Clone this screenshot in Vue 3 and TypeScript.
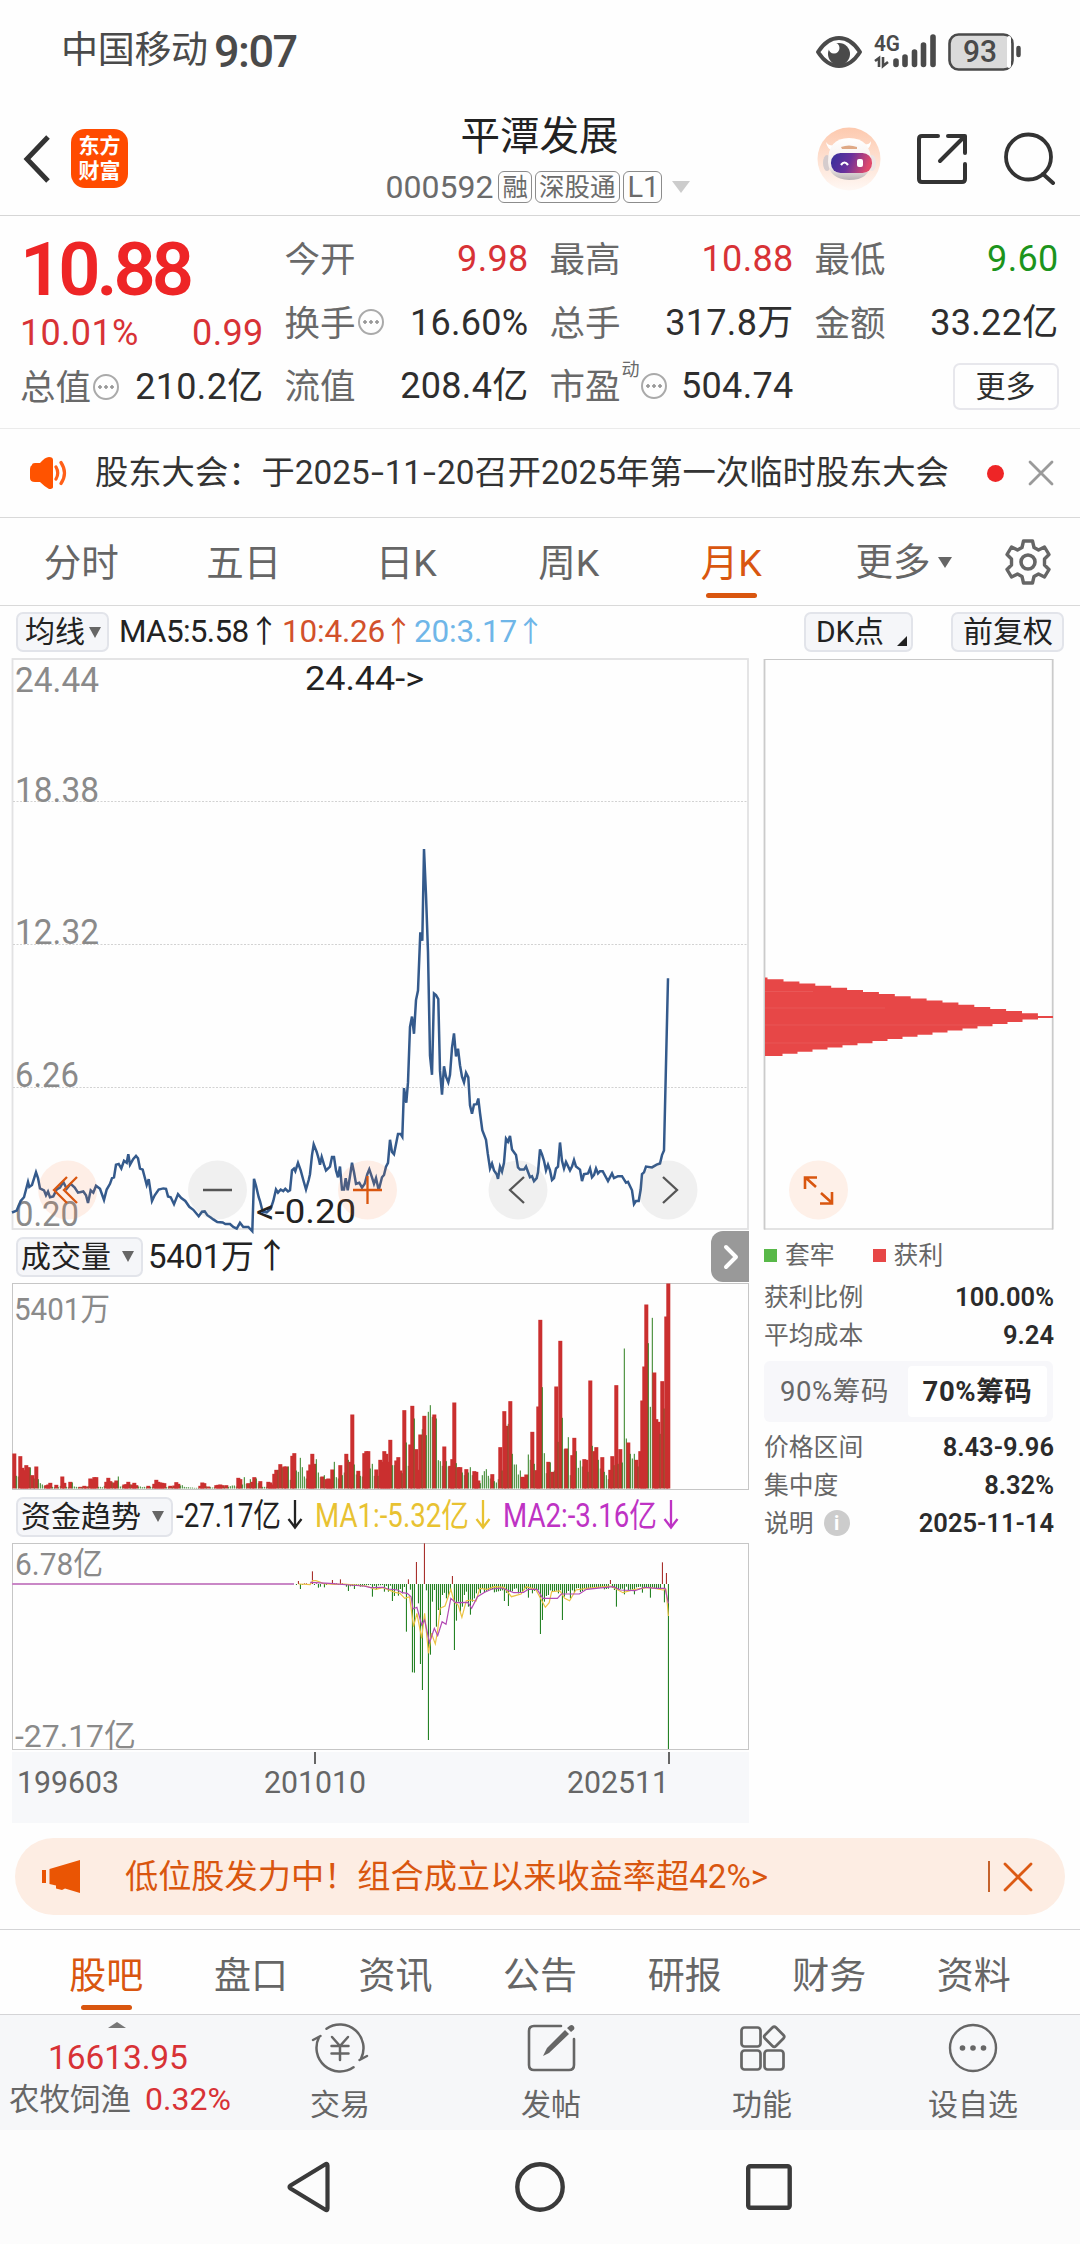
<script setup lang="ts">
type Pt = [number, number]

interface Quote { label: string; value: string; tone?: string; tip?: boolean }

const quotes: Quote[] = [
  { label: '今开', value: '9.98', tone: 'up' },
  { label: '最高', value: '10.88', tone: 'up' },
  { label: '最低', value: '9.60', tone: 'down' },
  { label: '换手', value: '16.60%', tip: true },
  { label: '总手', value: '317.8万' },
  { label: '金额', value: '33.22亿' },
]

const periods = ['分时', '五日', '日K', '周K', '月K']
const sections = ['股吧', '盘口', '资讯', '公告', '研报', '财务', '资料']

const parse = (s: string): Pt[] => s.trim().split(/\s+/).map(p => p.split(',').map(Number) as Pt)
const line = (pts: Pt[]) => pts.map(p => p.map(n => n.toFixed(1)).join(',')).join(' ')

/* monthly closing line: x in thirds of a pixel, y in chart steps below 650 */
const closeRaw = `36,1470 50,1465 62,1440 72,1430 84,1390 88,1403 96,1398 108,1365 114,1380 120,1407 132,1412 138,1425 144,1415 150,1430 160,1428 170,1410 180,1405 190,1390 200,1408 212,1395 224,1405 234,1418 250,1415 258,1425 264,1445 272,1412 280,1418 288,1400 300,1408 312,1437 320,1410 330,1395 336,1380 342,1378 348,1345 356,1343 364,1355 372,1335 380,1340 385,1318 390,1345 400,1330 408,1322 414,1328 420,1355 428,1358 434,1378 440,1398 446,1383 456,1440 464,1425 476,1410 490,1407 498,1408 504,1428 512,1430 522,1448 534,1422 544,1432 556,1440 568,1455 580,1463 596,1480 606,1468 614,1467 622,1477 632,1483 640,1488 652,1495 668,1496 676,1500 690,1500 700,1508 710,1512 720,1497 730,1508 745,1508 757,1519 762,1382 768,1400 776,1430 780,1440 788,1468 800,1470 812,1460 820,1440 828,1410 834,1418 842,1410 850,1414 856,1408 864,1415 870,1412 876,1360 882,1355 886,1362 894,1340 902,1360 910,1385 918,1410 926,1385 930,1370 936,1320 941,1292 950,1312 956,1330 960,1345 965,1325 972,1345 978,1360 990,1350 996,1325 1002,1325 1008,1360 1014,1378 1020,1350 1026,1410 1032,1410 1037,1380 1043,1412 1050,1375 1056,1340 1062,1365 1068,1395 1078,1392 1086,1405 1094,1395 1102,1370 1108,1357 1116,1378 1122,1395 1128,1380 1136,1412 1146,1378 1152,1372 1158,1350 1164,1340 1170,1280 1176,1312 1182,1318 1194,1265 1202,1265 1207,1272 1212,1145 1219,1183 1224,1130 1230,985 1236,958 1242,1003 1248,915 1254,890 1261,738 1267,760 1272,520 1278,640 1284,790 1290,1060 1296,1110 1302,898 1308,902 1315,912 1320,1100 1326,1162 1332,1088 1338,1115 1345,1130 1350,1110 1356,1040 1362,1002 1368,1062 1374,1042 1380,1085 1386,1115 1392,1130 1398,1105 1405,1117 1410,1190 1416,1212 1422,1188 1430,1187 1435,1172 1440,1210 1447,1255 1458,1280 1463,1315 1470,1355 1476,1342 1482,1360 1490,1370 1494,1382 1500,1350 1506,1363 1512,1340 1518,1277 1524,1285 1530,1270 1536,1305 1548,1320 1554,1352 1560,1358 1572,1358 1578,1350 1590,1378 1596,1375 1602,1388 1610,1380 1614,1365 1620,1305 1626,1318 1632,1335 1638,1360 1644,1345 1650,1360 1656,1385 1662,1380 1668,1355 1674,1350 1680,1287 1686,1335 1692,1355 1698,1338 1710,1360 1716,1350 1722,1333 1728,1350 1740,1358 1746,1388 1752,1370 1764,1368 1770,1355 1776,1378 1782,1372 1788,1355 1794,1368 1800,1362 1808,1362 1824,1388 1836,1368 1842,1380 1854,1375 1866,1375 1878,1392 1884,1390 1896,1412 1902,1448 1908,1440 1916,1440 1922,1410 1926,1370 1932,1365 1938,1350 1956,1352 1970,1345 1980,1342 1986,1320 1992,1308 2004,858`
const closeLine = line(parse(closeRaw).map(([x, y]): Pt => [x / 3, 650 + y / 2.6133]))

/* monthly volume, one entry for each month: height in thirds of a pixel and direction */
const volumeRaw = `105r 38g 36g 97r 62r 55r 70r 64r 63g 40r 30g 66r 28g 16g 12g 8g 10r 12r 17r 5g 4g 11r 4g 8g 36r 17r 5g 4g 20r 18g 6g 5g 4g 5r 5g 8r 6r 7g 30r 28r 34r 34r 5g 5g 4g 8g 20r 32r 22r 18g 18r 24r 36g 6g 8g 12r 13r 20r 12g 12r 17r 10r 6g 6g 4g 5g 4g 8r 5g 5g 14r 26r 20r 18r 17r 16r 4g 5g 8r 5g 9r 19r 14r 9g 10g 5g 4g 4g 3g 3g 2g 2g 2g 8r 18r 16r 6g 6r 4g 3g 4g 10r 11r 12r 10r 6g 10r 5g 7g 9g 9g 6g 32r 28r 12g 34g 14g 16r 28g 20r 34r 30g 16g 22r 5g 5g 5g 20r 18r 12r 44r 56r 56g 73r 63g 66r 66r 66g 26g 98r 106r 54g 50g 92g 64g 36g 30g 54r 72r 104r 74r 88g 48g 34g 36r 40g 28r 30r 28r 57r 80g 34g 30g 70r 40g 48g 104r 86g 80r 222r 72g 42g 53r 38g 36g 106r 112r 112r 60g 74g 38g 57r 38g 86r 80r 112r 104r 80r 146r 70g 70g 84r 94r 54r 46g 235r 138g 68g 132r 248r 210g 118r 56r 162r 178g 218r 160g 230g 250g 215g 222r 210g 85g 82g 68g 126r 82g 66g 68r 88r 258r 76g 64r 64r 48g 40g 58r 48g 64g 40g 52r 50r 24r 16g 40g 52g 58g 38g 30g 43r 22g 18g 28g 124r 54g 232r 188r 194g 262r 104g 72g 72g 42g 54g 35r 34r 42r 102g 86g 170r 74g 55r 246r 506r 304g 106g 46g 80r 78g 50r 54g 306r 140g 443r 212g 118g 120r 154g 40g 100r 152r 112g 62g 84g 66g 88r 86r 50g 324r 128g 112r 124r 86g 60g 94r 50g 40g 28g 56r 97r 70g 310r 74g 118r 78g 420g 150g 138r 104g 90g 104g 86r 66g 112r 264r 366r 552r 436g 245g 512g 348r 208r 200r 164g 322r 240g 516r 615r`
const entries = volumeRaw.split(' ')
const volume = entries.map((e, i) => {
  const up = e.endsWith('r')
  const h = parseInt(e) / 3
  const x = 668.3 - (entries.length - 1 - i) * 2
  return { x: up ? x - 2 : x - 0.5, w: up ? 4 : 1, h, y: 1488.5 - h, up }
})

/* capital flow: irregular months first, the quiet ones are filled in between */
const flowPeaks: Record<number, number> = {}
parse(`616,153 645,124 686,150 702,148 843,148 859,96 876,40 934,138 1260,150 1367,97 1375,129 620,177 657,173 661,170 669,172 719,183 731,177 769,200 777,178 793,185 801,185 810,213 814,198 822,197 830,190 839,305 851,427 855,428 868,402 872,480 884,630 888,374 864,220 892,215 896,180 901,290 905,240 909,255 913,195 921,205 925,200 930,180 938,360 942,272 946,215 950,245 954,230 958,195 963,185 967,230 971,254 975,215 979,205 983,190 992,190 1000,188 1041,213 1049,228 1090,203 1115,312 1119,270 1123,215 1128,198 1132,195 1140,186 1152,190 1160,270 1164,200 1169,190 1177,205 1185,188 1197,186 1272,230 1288,193 1309,193 1325,188 1342,203 1371,217 1379,657`)
  .forEach(([x, y]) => { flowPeaks[Math.round((x / 2.063 - 14.5) / 2)] = y })
const flow: { x: number; y: number; h: number; up: boolean }[] = []
for (let i = 141; i <= 327; i++) {
  const x = 14.4 + i * 2
  const wave = (i * 7 + (i % 5) * 3) % 11
  const quiet = i < 165 ? (i % 3 ? -2 : 3) : i < 190 ? 2 + wave * 0.6 : i < 205 ? 8 + wave : i < 270 ? 13 + wave * 1.5 : i < 290 ? 12 + wave : 8 + wave
  const end = flowPeaks[i] !== undefined ? flowPeaks[i] - 162 : quiet
  flow.push({ x, y: end < 0 ? 1584 + end / 3 : 1584, h: Math.abs(end) / 3, up: end < 0 })
}
const toFlow = (s: string) => line(parse(s).map(([x, y]): Pt => [x / 2.063, 1530 + y / 3]))
const ma1 = toFlow(`616,162 640,164 645,152 652,152 660,156 668,161 690,163 710,162 740,166 755,168 775,178 790,173 815,187 825,190 835,205 845,200 853,290 860,250 870,325 876,250 884,370 890,310 898,342 903,300 908,235 918,228 930,178 937,215 945,225 953,262 962,212 972,210 982,213 990,175 1005,178 1020,170 1040,172 1055,200 1075,192 1085,170 1105,178 1115,205 1125,232 1133,218 1138,185 1155,183 1165,205 1175,212 1188,180 1210,175 1260,168 1285,188 1310,178 1340,172 1368,180 1374,178 1379,258`)
const ma2 = toFlow(`640,157 680,160 720,165 750,168 765,173 790,172 800,177 820,180 830,188 840,190 848,200 852,237 860,232 870,285 876,270 886,338 896,295 903,317 912,275 920,283 930,205 940,218 965,217 973,235 985,200 1000,187 1015,177 1035,174 1060,188 1080,187 1090,178 1108,178 1120,205 1150,205 1158,192 1195,192 1210,178 1265,170 1280,180 1310,182 1330,172 1355,175 1372,175 1379,220`)

/* chip distribution: terraces narrowing towards the average cost */
const chips = (() => {
  let d = 'M765 977.5H767.5'
  for (let i = 0; i < 17; i++) d += `V${(979.3 + i * 2.12).toFixed(1)}H${(783.5 + i * 15.9).toFixed(1)}`
  d += 'V1016H1053V1018H1038V1019.5'
  for (let i = 0; i < 17; i++) d += `H${(1022.5 - i * 15).toFixed(1)}V${(1022 + i * 2.12).toFixed(1)}`
  return d + 'H765Z'
})()

const priceLabels = [
  { t: '24.44', y: 691.5, w: 84 },
  { t: '18.38', y: 802, w: 84 },
  { t: '12.32', y: 944, w: 84 },
  { t: '6.26', y: 1087, w: 64 },
  { t: '0.20', y: 1225.5, w: 64 },
]
</script>

<template>
  <div class="page">
    <div class="status">
      <span class="carrier">中国移动</span><span class="clock">9:07</span>
      <svg class="status-icons" width="220" height="60" viewBox="810 20 220 60">
        <path d="M818 52Q827 38 839 38Q851 38 860 52Q851 66 839 66Q827 66 818 52Z" fill="none" stroke="#4a4a4a" stroke-width="4" stroke-linejoin="round" />
        <circle cx="839" cy="54" r="11" fill="#4a4a4a" /><circle cx="834" cy="48" r="5.5" fill="#fefefe" />
        <text x="874" y="51" font-size="22" font-weight="600" fill="#4a4a4a" textLength="26" lengthAdjust="spacingAndGlyphs">4G</text>
        <path d="M875 61l4-3v9M883 57v9l5-4" fill="none" stroke="#4a4a4a" stroke-width="2.6" />
        <g stroke="#4a4a4a" stroke-width="5.6" stroke-linecap="round"><path d="M896 61v3.500M905 57v7.500M914.500 52v12.500M923.500 45v19.500M933 37v27.500" /></g>
        <rect x="949.500" y="34.500" width="63" height="35" rx="9" fill="#dadada" stroke="#4a4a4a" stroke-width="2.600" />
        <rect x="1007" y="36" width="4" height="32" rx="2" fill="#fff" />
        <path d="M1018.500 48v7" stroke="#4a4a4a" stroke-width="4.500" stroke-linecap="round" />
        <text x="963" y="62" font-size="31" font-weight="500" fill="#4a4a4a" textLength="34" lengthAdjust="spacingAndGlyphs">93</text>
      </svg>
    </div>

    <header class="header">
      <svg class="back" width="30" height="52" viewBox="0 0 30 52"><path d="M26 4L5 26L26 48" fill="none" stroke="#333" stroke-width="5" /></svg>
      <div class="logo"><span>东方</span><span>财富</span></div>
      <div class="title">
        <div class="name">平潭发展</div>
        <div class="code"><span class="num">000592</span><b>融</b><b>深股通</b><b>L1</b><i class="drop"></i></div>
      </div>
      <svg class="robot" width="64" height="64" viewBox="0 0 64 64">
        <defs>
          <linearGradient id="peach" x1="0" y1="0" x2="0" y2="1"><stop offset="0" stop-color="#fdc9ae" /><stop offset="1" stop-color="#fff8f4" /></linearGradient>
          <linearGradient id="visor" x1="0" y1="0" x2="1" y2="0.2"><stop offset="0" stop-color="#35309c" /><stop offset=".5" stop-color="#68309c" /><stop offset="1" stop-color="#e04a6c" /></linearGradient>
          <linearGradient id="shell" x1="0" y1="0" x2="0" y2="1"><stop offset="0" stop-color="#fff" /><stop offset=".7" stop-color="#f4ece9" /><stop offset="1" stop-color="#b9b2b5" /></linearGradient>
        </defs>
        <circle cx="32" cy="32" r="31.500" fill="url(#peach)" />
        <path d="M9 15q1 7 7 9l4-6q-8 2-11-3zM54 14q0 7-6 9l-4-6q8 2 10-3z" fill="#fff" />
        <ellipse cx="10" cy="36" rx="4" ry="8" fill="#d5cccd" /><ellipse cx="55" cy="36" rx="4" ry="8" fill="#eee5e4" />
        <path d="M11 35Q11 11 32 11Q54 11 54 35Q53 53 32 53Q12 52 11 35Z" fill="url(#shell)" />
        <path d="M24 20q8-3 16 0v2H25z" fill="#dfa986" />
        <rect x="14" y="26" width="41" height="20" rx="9.500" fill="url(#visor)" />
        <path d="M24 38q3.500-5 7 0" fill="none" stroke="#fff" stroke-width="2.200" /><rect x="40" y="32" width="6" height="8" rx="2" fill="#fff" />
      </svg>
      <svg class="share" width="52" height="54" viewBox="915 132 52 54"><path d="M938 136H922q-3 0-3 3v40q0 3 3 3h40q3 0 3-3V164M948 136h17v17M964 137L940 161" fill="none" stroke="#333" stroke-width="4" stroke-linecap="round" stroke-linejoin="round" /></svg>
      <svg class="search" width="54" height="54" viewBox="1003 130 54 54"><circle cx="1028.500" cy="156" r="22.500" fill="none" stroke="#333" stroke-width="3.800" /><path d="M1043 173l10 9" stroke="#333" stroke-width="4" stroke-linecap="round" /></svg>
    </header>

    <section class="quote">
      <div class="col first">
        <div class="last">10.88</div>
        <div class="pair up"><span>10.01%</span><span>0.99</span></div>
        <div class="pair"><span class="lab">总值<i class="tip"></i></span><span>210.2亿</span></div>
      </div>
      <div class="rest">
        <div v-for="q in quotes" :key="q.label" class="pair">
          <span class="lab">{{ q.label }}<i v-if="q.tip" class="tip"></i></span><span :class="q.tone">{{ q.value }}</span>
        </div>
        <div class="pair"><span class="lab">流值</span><span>208.4亿</span></div>
        <div class="pair"><span class="lab">市盈<sup>动</sup><i class="tip"></i></span><span>504.74</span></div>
        <div class="pair end"><button class="more">更多</button></div>
      </div>
    </section>

    <section class="notice">
      <svg width="38" height="34" viewBox="0 0 38 34"><path d="M3 9q0-2 3-2h5Q16 1 20 1q4 0 4 3v27q0 2-4 2Q16 31 11 26H6q-5 0-5-4V13q0-3 2-4z" fill="#ff5300" /><path d="M27 11q3.500 6 0 12M32 6.500q7 10.500 0 21" fill="none" stroke="#ff5f18" stroke-width="3.200" stroke-linecap="round" /></svg>
      <span class="notice-text">股东大会：于2025<i>-</i>11<i>-</i>20召开2025年第一次临时股东大会</span>
      <i class="dot"></i>
      <svg class="close" width="26" height="26" viewBox="0 0 26 26"><path d="M2 2L24 24M24 2L2 24" stroke="#9a9a9a" stroke-width="2.800" stroke-linecap="round" /></svg>
    </section>

    <nav class="periods">
      <span v-for="p in periods" :key="p" :class="{ on: p === '月K' }">{{ p }}</span>
      <span class="wide">更多<i></i></span>
      <svg width="46" height="46" viewBox="-23 -23 46 46"><path d="M-4.500-21H4.500L6-14.500L10.500-12L16.500-15L21-7.500L16.500-3V3L21 7.500L16.500 15L10.500 12L6 14.500L4.500 21H-4.500L-6 14.500L-10.500 12L-16.500 15L-21 7.500L-16.500 3V-3L-21-7.500L-16.500-15L-10.500-12L-6-14.500Z" fill="none" stroke="#666" stroke-width="3.400" stroke-linejoin="round" /><circle r="7" fill="none" stroke="#666" stroke-width="3.600" /></svg>
    </nav>

    <div class="toolbar">
      <button class="chip">均线<i></i></button>
      <span class="ma5">MA5:5.58</span><em>↑</em>
      <span class="ma red">10:4.26</span><em class="red">↑</em>
      <span class="ma blue">20:3.17</span><em class="blue">↑</em>
      <button class="chip dk">DK点<u></u></button>
      <button class="chip fq">前复权</button>
    </div>

    <main class="charts">
      <div class="left">
        <svg class="price" width="737" height="572" viewBox="12 658 737 572">
          <rect x="12.500" y="659" width="735.500" height="570" fill="none" stroke="#e2e2e3" stroke-width="1.800" />
          <path d="M13 801.500H748M13 944.500H748M13 1087.500H748" stroke="#d2d2d2" stroke-dasharray="2 1.500" />
          <text v-for="l in priceLabels" :key="l.t" x="15" :y="l.y" :textLength="l.w" lengthAdjust="spacingAndGlyphs" font-size="35" fill="#8a8a8a">{{ l.t }}</text>
          <polyline :points="closeLine" fill="none" stroke="#345a8c" stroke-width="2.500" stroke-linejoin="miter" />
          <text x="305" y="690" font-size="34" fill="#222" textLength="119" lengthAdjust="spacingAndGlyphs">24.44-&gt;</text>
          <text x="256" y="1223" font-size="34" fill="#222" textLength="100" lengthAdjust="spacingAndGlyphs">&lt;-0.20</text>
          <g fill="#fd7a3a" fill-opacity=".12"><circle cx="67.700" cy="1190" r="29.500" /><circle cx="367.500" cy="1190" r="29.500" /></g>
          <g fill="#808080" fill-opacity=".11"><circle cx="217.500" cy="1190" r="29.500" /><circle cx="518" cy="1190" r="29.500" /><circle cx="668" cy="1190" r="29.500" /></g>
          <g fill="none" stroke-width="2.300"><path d="M67 1177L54 1190L67 1203M77 1177L64 1190L77 1203M353 1190H382M367.500 1176V1204" stroke="#d9560f" /><path d="M203 1190H232M524 1177L510 1190L524 1203M663 1177L677 1190L663 1203" stroke="#555" /></g>
        </svg>
        <div class="bar">
          <button class="chip vol">成交量<i></i></button><span class="volnum">5401万</span><em>↑</em>
          <div class="fold"><svg width="18" height="28" viewBox="0 0 18 28"><path d="M4 4L14 14L4 24" fill="none" stroke="#fff" stroke-width="4" stroke-linecap="round" stroke-linejoin="round" /></svg></div>
        </div>
        <svg width="737" height="207" viewBox="12 1283 737 207">
          <rect x="12.500" y="1283.500" width="736" height="206" fill="none" stroke="#c6c6c6" />
          <text x="14" y="1320" font-size="32" fill="#8a8a8a" textLength="96" lengthAdjust="spacingAndGlyphs">5401万</text>
          <rect v-for="(b, i) in volume" :key="i" :x="b.x" :y="b.y" :width="b.w" :height="b.h" :fill="b.up ? '#ca2f2f' : '#2f7f20'" />
        </svg>
        <div class="bar">
          <button class="chip cap">资金趋势<i></i></button>
          <svg class="flow-head" width="520" height="52" viewBox="174 1491 520 52" font-size="33">
            <text x="175" y="1527" textLength="105" lengthAdjust="spacingAndGlyphs" fill="#222">-27.17亿</text>
            <text x="314" y="1527" textLength="154" lengthAdjust="spacingAndGlyphs" fill="#e8c232">MA1:-5.32亿</text>
            <text x="502" y="1527" textLength="154" lengthAdjust="spacingAndGlyphs" fill="#be33c4">MA2:-3.16亿</text>
            <g fill="none" stroke-width="2.300"><path d="M294 1500V1527M287.500 1519L294 1527.500L300.500 1519" stroke="#222" /><path d="M482 1500V1527M475.500 1519L482 1527.500L488.500 1519" stroke="#e8c232" /><path d="M670 1500V1527M663.500 1519L670 1527.500L676.500 1519" stroke="#be33c4" /></g>
          </svg>
        </div>
        <svg class="flow" width="737" height="209" viewBox="12 1543 737 209">
          <rect x="12.500" y="1543.500" width="736" height="206" fill="none" stroke="#c6c6c6" />
          <text x="15" y="1575" font-size="32" fill="#8a8a8a" textLength="88" lengthAdjust="spacingAndGlyphs">6.78亿</text>
          <text x="15" y="1746.500" font-size="32" fill="#8a8a8a" textLength="121" lengthAdjust="spacingAndGlyphs">-27.17亿</text>
          <path d="M12 1584H294" stroke="#c987c6" stroke-width="2" />
          <rect v-for="(b, i) in flow" :key="i" :x="b.x - 0.5" :y="b.y" width="1.100" :height="b.h" :fill="b.up ? '#a8312d' : '#258225'" />
          <polyline :points="ma1" fill="none" stroke="#ecc243" stroke-width="1.200" />
          <polyline :points="ma2" fill="none" stroke="#b24ab4" stroke-width="1.200" />
        </svg>
        <svg class="axis" width="737" height="71" viewBox="12 1752 737 71" font-size="32" fill="#666">
          <path d="M315 1752V1764M669 1752V1764" stroke="#666" stroke-width="2" />
          <text x="17" y="1793" textLength="102" lengthAdjust="spacingAndGlyphs">199603</text>
          <text x="264" y="1793" textLength="102" lengthAdjust="spacingAndGlyphs">201010</text>
          <text x="567" y="1793" textLength="102" lengthAdjust="spacingAndGlyphs">202511</text>
        </svg>
      </div>

      <aside class="right">
        <svg width="291" height="572" viewBox="763 658 291 572">
          <path d="M764 659.500H1053M764 1229H1053" stroke="#c8c8c8" /><path d="M764.500 659V1229.500M1052.700 659V1229.500" stroke="#cbcbcb" stroke-width="1.800" />
          <path :d="chips" fill="#e74747" />
          <path d="M765 991.500H813M765 1008H885M765 1025H990M765 1043H850" stroke="#ea5c5c" stroke-width=".8" />
          <circle cx="818.500" cy="1190" r="29.500" fill="#fef0e8" />
          <path d="M816 1187L806 1178M805 1189V1177.500H817M821 1193L831 1202M820 1203.500H832V1192" fill="none" stroke="#d9560f" stroke-width="2.600" />
        </svg>
        <div class="legend"><i class="g"></i><span>套牢</span><i class="r"></i><span>获利</span></div>
        <div class="row"><span>获利比例</span><b>100.00%</b></div>
        <div class="row"><span>平均成本</span><b>9.24</b></div>
        <div class="switch"><span>90%筹码</span><b>70%筹码</b></div>
        <div class="row"><span>价格区间</span><b>8.43-9.96</b></div>
        <div class="row"><span>集中度</span><b>8.32%</b></div>
        <div class="row"><span>说明<i>i</i></span><b>2025-11-14</b></div>
      </aside>
    </main>

    <div class="promo">
      <svg width="40" height="36" viewBox="40 1859 40 36"><path d="M41 1870h4v13h-4zM48.500 1869L79 1860V1893L64 1888.500l-3 1.500l-6-1.500v-3l-6.500-1.500z" fill="#ea5504" /></svg>
      <span class="promo-text">低位股发力中！组合成立以来收益率超42%&gt;</span>
      <i class="sep"></i>
      <svg width="30" height="30" viewBox="0 0 30 30"><path d="M2 2L28 28M28 2L2 28" stroke="#dc5a14" stroke-width="2.800" stroke-linecap="round" /></svg>
    </div>

    <nav class="sections"><span v-for="s in sections" :key="s" :class="{ on: s === '股吧' }">{{ s }}</span></nav>

    <footer class="actions">
      <div class="index">
        <i></i>
        <div class="idx up">16613.95</div>
        <div class="sector">农牧饲渔<span class="up">0.32%</span></div>
      </div>
      <div class="act">
        <svg width="60" height="54" viewBox="-30 -27 60 54"><g fill="none" stroke="#666" stroke-width="2.500" stroke-linecap="round" stroke-linejoin="round"><path d="M-13.500-19.300A23.600 23.600 0 0 1 21 10.700M27 8L19.500 12M13.500 19.300A23.600 23.600 0 0 1-21-10.700M-27-8L-19.500-12" /><path d="M-8-11L0-2L8-11M0-2V12M-8.500-2H8.500M-8.500 5.500H8.500" /></g></svg>
        <span>交易</span>
      </div>
      <div class="act">
        <svg width="60" height="54" viewBox="-30 -27 60 54"><path d="M10-22H-17q-5 0-5 5V17q0 5 5 5H18q5 0 5-5V-9" fill="none" stroke="#666" stroke-width="2.600" stroke-linecap="round" /><path d="M-8 8L-4 0L14-18L18-14L-2 5zM16-20l3-2.500q2-1 3.500.5t.5 3.500L20-16z" fill="#666" /></svg>
        <span>发帖</span>
      </div>
      <div class="act">
        <svg width="60" height="54" viewBox="-30 -27 60 54"><g fill="none" stroke="#666" stroke-width="2.700"><rect x="-20.500" y="-20.500" width="19" height="19" rx="3" /><rect x="-20.500" y="2.500" width="19" height="19" rx="3" /><rect x="2.500" y="2.500" width="19" height="19" rx="3" /><rect x="4.500" y="-19" width="15.500" height="15.500" rx="2.500" transform="rotate(45 12.200 -11.300)" /></g></svg>
        <span>功能</span>
      </div>
      <div class="act">
        <svg width="60" height="54" viewBox="-30 -27 60 54"><circle r="23" fill="none" stroke="#666" stroke-width="2.400" /><g fill="#666"><circle cx="-10.500" r="2.800" /><circle r="2.800" /><circle cx="10.500" r="2.800" /></g></svg>
        <span>设自选</span>
      </div>
    </footer>

    <div class="system">
      <svg width="46" height="54" viewBox="285 2160 46 54"><path d="M327.500 2165.500V2208.500q0 2.500-2.500 1L290.500 2188.500q-2-1.500 0-3L325 2164.500q2.500-1.500 2.500 1z" fill="none" stroke="#3a3a3a" stroke-width="4.200" stroke-linejoin="round" /></svg>
      <svg width="54" height="54" viewBox="-27 -27 54 54"><circle r="22.700" fill="none" stroke="#3a3a3a" stroke-width="4.400" /></svg>
      <svg width="46" height="46" viewBox="0 0 46 46"><rect x="2.200" y="2.200" width="41.500" height="41.500" rx="2" fill="none" stroke="#3a3a3a" stroke-width="4.400" /></svg>
    </div>
  </div>
</template>

<style>
body { margin: 0; background: #fefefe; }
</style>

<style scoped>
* { box-sizing: border-box; }
.page { position: relative; z-index: 0; width: 1080px; height: 2244px; overflow: hidden; background: #fefefe; color: #2e2e2e; font-family: Roboto, "Noto Sans CJK SC", sans-serif; display: flex; flex-direction: column; font-size: 36px; line-height: 1.2; white-space: nowrap; }
.page > * { flex: none; }
svg { display: block; flex: none; }
i, em { font-style: normal; }
u { text-decoration: none; }
button { font: inherit; color: inherit; padding: 0; margin: 0; }
.up { color: #d83236; }
.down { color: #1c941c; }
.red { color: #d2512b; }
.blue { color: #6fb6e8; }

.status { height: 100px; display: flex; align-items: center; padding-left: 61px; color: #4a4a4a; }
.carrier { font-size: 37px; line-height: 60px; letter-spacing: -.3px; width: 153px; padding-top: 2px; }
.clock { font-size: 45px; font-weight: 500; letter-spacing: -1.5px; line-height: 60px; padding-top: 3px; }
.status-icons { margin-left: auto; margin-right: 50px; }

.header { height: 116px; border-bottom: 1px solid #d6d6d6; display: grid; grid-template-columns: 71px 57px 689px 64px 34px 52px 36px 54px; align-items: center; }
.header > svg, .logo { margin-top: 2px; }
.header .search { margin-top: 0; }
.back { margin-left: 22px; }
.logo { width: 57px; height: 59px; border-radius: 14px; background: #ff4b00; color: #fff; font-size: 21px; line-height: 25px; font-weight: 700; display: flex; flex-direction: column; align-items: center; justify-content: center; }
.title { text-align: center; padding-left: 118px; }
.name { font-size: 39.500px; line-height: 50px; color: #222; padding-left: 16px; margin-top: 5px; }
.code { display: flex; justify-content: center; align-items: center; height: 42px; font-size: 32px; color: #6b6b6b; padding-left: 13px; margin-top: 4px; }
.code .num { margin-right: 5px; }
.code b { font-weight: 400; font-size: 25.500px; height: 32px; line-height: 30px; border: 1.500px solid #8c8c8c; border-radius: 6px; padding: 0 3px; margin-right: 3px; }
.code b:nth-of-type(3) { font-size: 29px; padding: 0 2px 0 4px; }
.drop { border: 9px solid transparent; border-top: 12px solid #ccc; border-bottom: 0; margin-left: 7px; }
.robot { justify-self: end; }
.share { grid-column: 6; }
.search { grid-column: 8; }

.quote { height: 213px; border-bottom: 1px solid #ebebeb; padding: 12px 20px 0 20px; display: flex; column-gap: 23px; }
.first { width: 243.500px; margin-right: -2px; }
.last { height: 79px; line-height: 83px; font-size: 74px; font-weight: 600; letter-spacing: -4px; color: #ee2526; padding-left: 0; }
.rest { flex: 1; display: grid; grid-template-columns: 244px 244px 244px; column-gap: 21px; grid-auto-rows: 63.500px; }
.pair { height: 63.500px; display: flex; align-items: center; justify-content: space-between; letter-spacing: .3px; }
.first .pair { height: 53px; }
.first .pair:last-child { margin-top: 1px; }
.lab { color: #696969; display: flex; align-items: center; font-size: 35.500px; position: relative; letter-spacing: 0; padding-top: 2px; }
.tip { width: 26px; height: 26px; border: 2px solid #aaa; border-radius: 50%; margin: -4px 0 0 2px; background: radial-gradient(circle at 5px 11px, #999 1.500px, transparent 2px), radial-gradient(circle at 11px 11px, #999 1.500px, transparent 2px), radial-gradient(circle at 17px 11px, #999 1.500px, transparent 2px); }
sup { font-size: 18px; line-height: 18px; align-self: flex-start; margin: -5px 0 0 1px; width: 18px; }
sup + .tip { margin-left: 1px; }
.end { justify-content: flex-end; }
.more { width: 106px; height: 47px; border: 2px solid #e7e7ec; border-radius: 7px; background: transparent; font-size: 30px; line-height: 43px; letter-spacing: 0; }

.notice { height: 89px; border-bottom: 1px solid #d9d9d9; display: flex; align-items: center; padding-left: 29px; }
.notice-text { font-size: 33.300px; margin-left: 28px; color: #333; width: 854px; }
.notice-text i { display: inline-block; transform: scaleX(1.4); width: 15px; text-align: center; }
.dot { width: 17px; height: 17px; border-radius: 50%; background: #ee2526; margin-left: 38px; }
.close { margin-left: 24px; }

.periods { height: 88px; border-bottom: 1px solid #d9d9d9; display: flex; align-items: center; color: #666; font-size: 37.500px; }
.periods span { width: 162.500px; text-align: center; position: relative; line-height: 88px; padding-top: 1px; height: 88px; }
.periods .wide { width: 182px; display: flex; justify-content: center; align-items: center; }
.periods i { border: 7px solid transparent; border-top: 11px solid #666; border-bottom: 0; margin-left: 7px; }
.on { color: #d9560f; }
.on::after { content: ""; position: absolute; left: 50%; margin-left: -25.500px; width: 51px; height: 5px; border-radius: 3px; background: #d9560f; bottom: 8px; }
.periods svg { margin-left: 10px; }

.toolbar { height: 52px; padding: 6px 16px; display: flex; align-items: center; font-size: 31.500px; color: #222; }
.chip { display: flex; align-items: center; height: 40px; border: 2px solid #e2e4ea; border-radius: 7px; background: #f5f6f9; font-size: 30px; padding-left: 7px; color: #222; flex: none; }
.chip i { border: 6.500px solid transparent; border-top: 11px solid #666; border-bottom: 0; margin-left: 4px; }
.toolbar .chip { width: 93px; }
.ma5 { margin-left: 10px; width: 128px; letter-spacing: -.7px; }
em { text-align: center; }
.toolbar em { width: 34px; font-size: 31px; }
.toolbar .ma { margin-left: 1px; width: 102px; letter-spacing: -.2px; }
.toolbar .ma + em { width: 29px; font-size: 29px; }
.toolbar .dk { width: 109px; margin-left: auto; padding-left: 10px; margin-right: 38px; position: relative; letter-spacing: -.3px; }
.dk u { position: absolute; right: 4px; bottom: 4px; border-left: 10px solid transparent; border-bottom: 10px solid #222; }
.toolbar .fq { width: 113px; padding-left: 10px; }

.charts { display: flex; padding-left: 12px; height: 1165px; }
.left { width: 737px; }
.price, .flow { overflow: visible; }
.bar { height: 53px; display: flex; align-items: center; padding-left: 4px; color: #222; }
.vol { width: 127px; padding-left: 3px; }
.chip.vol i, .chip.cap i { margin-left: 11px; }
.volnum { font-size: 33px; margin-left: 5px; width: 106px; letter-spacing: -.3px; }
.bar em { width: 36px; font-size: 34px; }
.fold { margin-left: auto; width: 38px; height: 51px; background: #999; border-radius: 12px 0 0 12px; display: flex; align-items: center; justify-content: center; padding-left: 2px; }
.cap { width: 157px; padding-left: 3px; }
.flow-head { margin-left: 2px; }
.axis { background: #f7f8fa; position: relative; z-index: -1; }
.right { width: 291px; margin-left: 14px; color: #666; font-size: 24.800px; }
.legend { display: flex; align-items: center; height: 48px; padding: 3px 0 0 1px; }
.legend i { width: 13px; height: 13px; margin-right: 8px; }
.legend span { margin-right: 38px; padding-top: 1px; }
.g { background: #58b848; }
.r { background: #e74747; }
.row { display: flex; justify-content: space-between; align-items: center; height: 38px; padding: 1px 0 0 1px; }
.row span { display: flex; align-items: center; padding-top: 1px; }
.row b, .switch b { color: #2b2b2b; font-weight: 700; }
.row b { font-size: 25.500px; font-weight: 600; }
.row i { width: 26px; height: 26px; line-height: 26px; border-radius: 50%; background: #ccc; color: #fff; text-align: center; font-weight: 700; font-size: 20px; margin: -3px 0 0 10px; }
.switch { margin: 7px 0 6px 1px; height: 61px; width: 289px; border-radius: 6px; background: #f7f7fa; display: flex; align-items: center; padding: 0 6px 0 16px; font-size: 27.500px; letter-spacing: .6px; justify-content: space-between; }
.switch b { width: 139px; height: 51px; line-height: 51px; text-align: center; background: #fff; border-radius: 4px; }

.promo { margin: 15px 15px 14px; height: 77px; border-radius: 39px; background: #fdede3; color: #d9560f; display: flex; align-items: center; padding-left: 26px; }
.promo-text { font-size: 33.200px; margin-left: 44px; width: 863px; }
.sep { width: 1.500px; height: 31px; background: #c4622c; margin-right: 13px; }

.sections { height: 86px; border-top: 1px solid #d4d4d6; border-bottom: 1px solid #d4d4d6; display: flex; padding-left: 34px; color: #666; font-size: 37px; }
.sections span { width: 144.600px; text-align: center; position: relative; line-height: 93px; height: 84px; }
.sections .on { color: #d9560f; }
.sections .on::after { bottom: 4px; }

.actions { height: 115px; background: #f6f7f9; display: flex; }
.index { width: 234.500px; padding-top: 7px; }
.index > i { display: block; width: 0; border: 9px solid transparent; border-bottom: 6px solid #777; border-top: 0; margin-left: 108px; }
.idx { font-size: 33.500px; line-height: 40px; margin: 10px 0 0 48px; letter-spacing: -.1px; }
.sector { font-size: 30.500px; line-height: 40px; color: #666; padding-left: 9px; margin-top: 1px; }
.sector span { font-size: 32px; margin-left: 14px; }
.act { width: 211px; display: flex; flex-direction: column; align-items: center; color: #666; font-size: 30px; padding-top: 6px; }
.act span { line-height: 40px; margin-top: 10px; }
.system { flex: 1 !important; background: #fcfcfc; display: flex; align-items: center; }
.system svg:nth-child(1) { margin-left: 285px; }
.system svg:nth-child(2) { margin-left: 182px; }
.system svg:nth-child(3) { margin-left: 179px; }
</style>
